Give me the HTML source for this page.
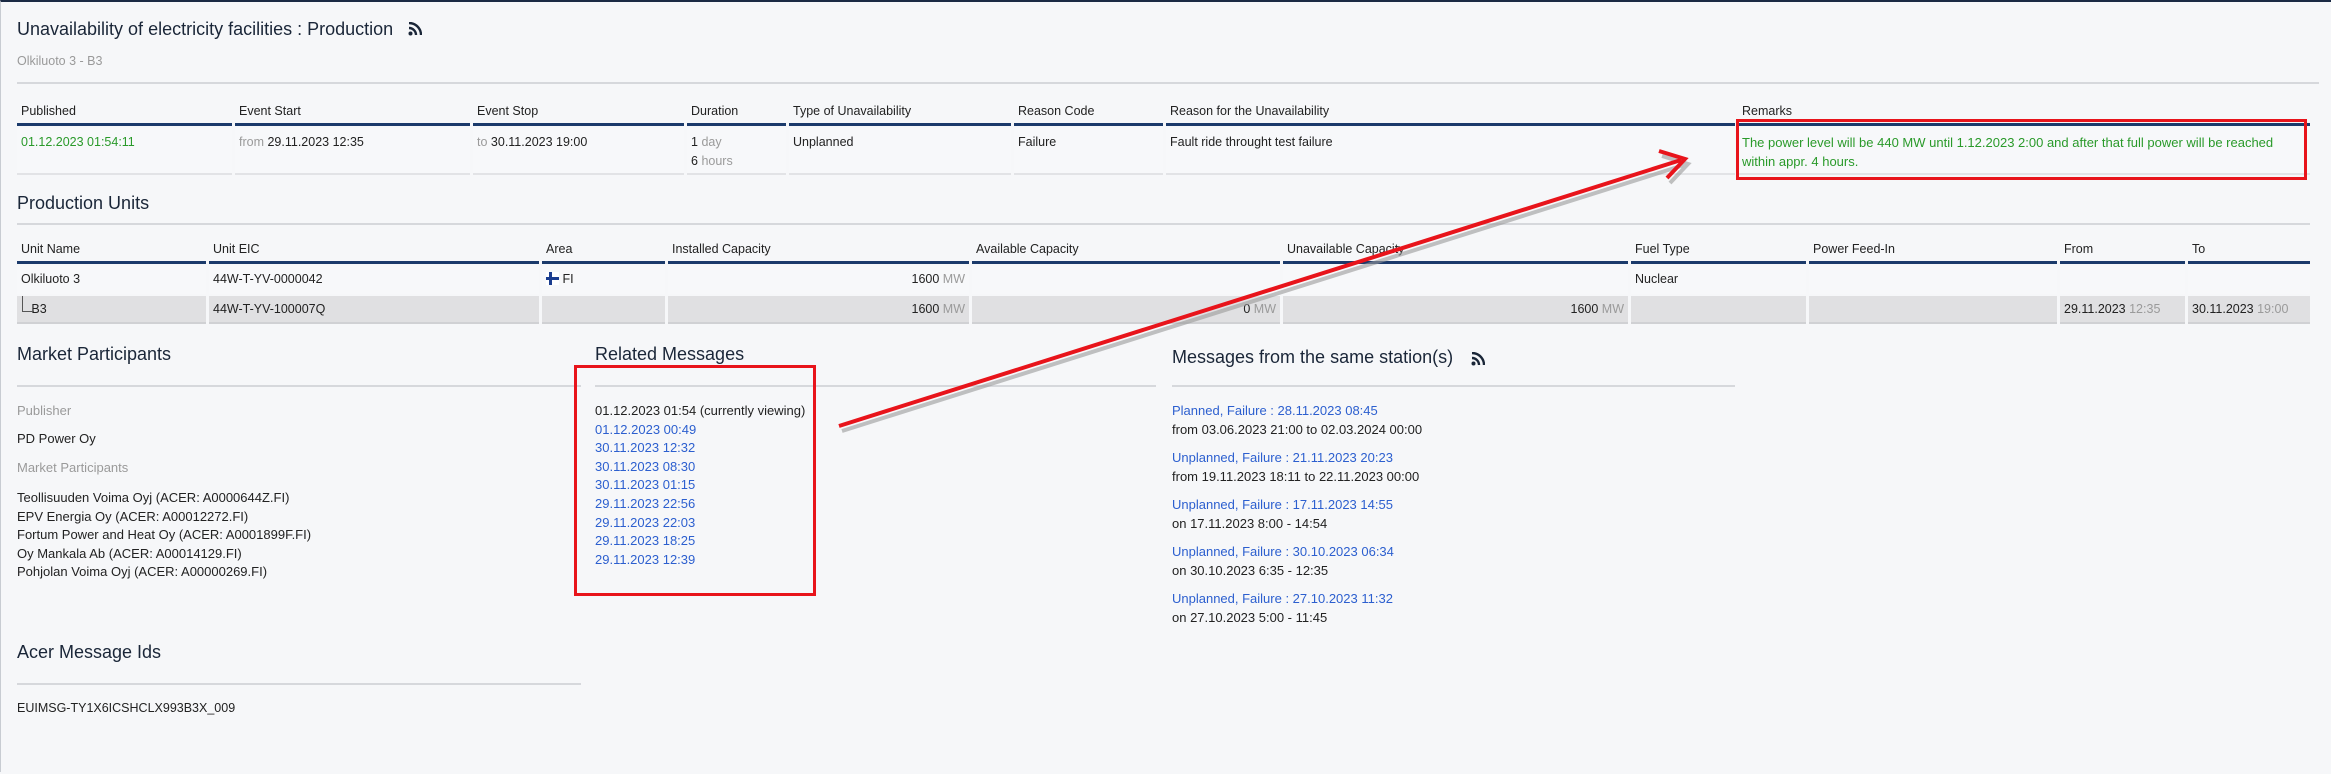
<!DOCTYPE html>
<html><head><meta charset="utf-8"><style>
*{margin:0;padding:0;box-sizing:border-box}
body{width:2331px;height:772px;background:#f6f7f9;font-family:"Liberation Sans",Arial,sans-serif;font-size:13px;color:#222;position:relative;overflow:hidden;border-top:2px solid #1b2a44;border-left:1px solid #c8ccd2}
.a{position:absolute;white-space:nowrap}
.h{font-size:18px;color:#1a2638}
.hr{position:absolute;height:2px;background:#d6d8dc}
.g{color:#9a9a9a}.gr{color:#2a9a2a}.bl{color:#2c5fcf}
.th{position:absolute;top:96px;height:28px;border-bottom:3px solid #1b3a6b;padding:6px 4px;font-size:12.5px}
.td{position:absolute;height:47px;border-bottom:2px solid #e2e3e6;background:#f7f8fa;padding:5px 4px;font-size:12.5px;line-height:19px}
.th2{position:absolute;top:234px;height:28px;border-bottom:3px solid #1b3a6b;padding:6px 4px;font-size:12.5px}
.r1{position:absolute;top:264px;height:28px;padding:6px 4px;font-size:12.5px;background:#f7f8fa}
.r2{position:absolute;top:294px;height:28px;padding:6px 4px;font-size:12.5px;background:#e0e0e2;border-bottom:2px solid #d0d1d4}
.rt{text-align:right}
</style></head><body>
<div class="a h" style="left:16px;top:17px">Unavailability of electricity facilities : Production</div>
<svg class="a" style="left:407px;top:20px" width="14" height="14" viewBox="0 0 14 14"><circle cx="2.5" cy="11.5" r="2" fill="#1a2638"/><path d="M1 6a7 7 0 0 1 7 7" stroke="#1a2638" stroke-width="2.4" fill="none"/><path d="M1 1a12 12 0 0 1 12 12" stroke="#1a2638" stroke-width="2.4" fill="none"/></svg>
<div class="a g" style="left:16px;top:52px;font-size:12.5px">Olkiluoto 3 - B3</div>
<div class="hr" style="left:16px;top:80px;width:2302px"></div>

<div class="th" style="left:16px;width:215px">Published</div>
<div class="th" style="left:234px;width:235px">Event Start</div>
<div class="th" style="left:472px;width:211px">Event Stop</div>
<div class="th" style="left:686px;width:99px">Duration</div>
<div class="th" style="left:788px;width:222px">Type of Unavailability</div>
<div class="th" style="left:1013px;width:149px">Reason Code</div>
<div class="th" style="left:1165px;width:569px">Reason for the Unavailability</div>
<div class="th" style="left:1737px;width:572px">Remarks</div>
<div class="td gr" style="left:16px;top:126px;width:215px">01.12.2023 01:54:11</div>
<div class="td" style="left:234px;top:126px;width:235px"><span class="g">from</span> 29.11.2023 12:35</div>
<div class="td" style="left:472px;top:126px;width:211px"><span class="g">to</span> 30.11.2023 19:00</div>
<div class="td" style="left:686px;top:126px;width:99px">1 <span class="g">day</span><br>6 <span class="g">hours</span></div>
<div class="td" style="left:788px;top:126px;width:222px">Unplanned</div>
<div class="td" style="left:1013px;top:126px;width:149px">Failure</div>
<div class="td" style="left:1165px;top:126px;width:569px">Fault ride throught test failure</div>
<div class="td gr" style="left:1737px;top:126px;width:572px;font-size:13px">The power level will be 440 MW until 1.12.2023 2:00 and after that full power will be reached<br>within appr. 4 hours.</div>

<div class="a h" style="left:16px;top:191px">Production Units</div>
<div class="hr" style="left:16px;top:221px;width:2293px"></div>

<div class="th2" style="left:16px;width:189px">Unit Name</div>
<div class="th2" style="left:208px;width:330px">Unit EIC</div>
<div class="th2" style="left:541px;width:123px">Area</div>
<div class="th2" style="left:667px;width:301px">Installed Capacity</div>
<div class="th2" style="left:971px;width:308px">Available Capacity</div>
<div class="th2" style="left:1282px;width:345px">Unavailable Capacity</div>
<div class="th2" style="left:1630px;width:175px">Fuel Type</div>
<div class="th2" style="left:1808px;width:248px">Power Feed-In</div>
<div class="th2" style="left:2059px;width:125px">From</div>
<div class="th2" style="left:2187px;width:122px">To</div>

<div class="r1" style="left:16px;width:189px">Olkiluoto 3</div>
<div class="r1" style="left:208px;width:330px">44W-T-YV-0000042</div>
<div class="r1" style="left:541px;width:123px"><svg width="13" height="13" style="vertical-align:-2px"><rect width="13" height="13" fill="#fff"/><rect x="3" width="3" height="13" fill="#1a3d8f"/><rect y="5" width="13" height="3" fill="#1a3d8f"/></svg> FI</div>
<div class="r1 rt" style="left:667px;width:301px">1600 <span class="g">MW</span></div>
<div class="r1" style="left:971px;width:308px"></div>
<div class="r1" style="left:1282px;width:345px"></div>
<div class="r1" style="left:1630px;width:175px">Nuclear</div>
<div class="r1" style="left:1808px;width:248px"></div>
<div class="r1" style="left:2059px;width:125px"></div>
<div class="r1" style="left:2187px;width:122px"></div>

<div class="r2" style="left:16px;width:189px">&nbsp;&nbsp;&nbsp;B3</div>
<div class="a" style="left:21px;top:294px;width:1px;height:15px;background:#555"></div>
<div class="a" style="left:21px;top:309px;width:12px;height:1px;background:#555"></div>
<div class="r2" style="left:208px;width:330px">44W-T-YV-100007Q</div>
<div class="r2" style="left:541px;width:123px"></div>
<div class="r2 rt" style="left:667px;width:301px">1600 <span class="g">MW</span></div>
<div class="r2 rt" style="left:971px;width:308px">0 <span class="g">MW</span></div>
<div class="r2 rt" style="left:1282px;width:345px">1600 <span class="g">MW</span></div>
<div class="r2" style="left:1630px;width:175px"></div>
<div class="r2" style="left:1808px;width:248px"></div>
<div class="r2" style="left:2059px;width:125px">29.11.2023 <span class="g">12:35</span></div>
<div class="r2" style="left:2187px;width:122px">30.11.2023 <span class="g">19:00</span></div>

<div class="a h" style="left:16px;top:342px">Market Participants</div>
<div class="hr" style="left:16px;top:383px;width:564px"></div>
<div class="a g" style="left:16px;top:401px">Publisher</div>
<div class="a" style="left:16px;top:429px">PD Power Oy</div>
<div class="a g" style="left:16px;top:458px">Market Participants</div>
<div class="a" style="left:16px;top:487px;line-height:18.5px">Teollisuuden Voima Oyj (ACER: A0000644Z.FI)<br>EPV Energia Oy (ACER: A00012272.FI)<br>Fortum Power and Heat Oy (ACER: A0001899F.FI)<br>Oy Mankala Ab (ACER: A00014129.FI)<br>Pohjolan Voima Oyj (ACER: A00000269.FI)</div>

<div class="a h" style="left:594px;top:342px">Related Messages</div>
<div class="hr" style="left:594px;top:383px;width:561px"></div>
<div class="a" style="left:594px;top:400px;line-height:18.6px">01.12.2023 01:54 (currently viewing)<br><span class="bl">01.12.2023 00:49<br>30.11.2023 12:32<br>30.11.2023 08:30<br>30.11.2023 01:15<br>29.11.2023 22:56<br>29.11.2023 22:03<br>29.11.2023 18:25<br>29.11.2023 12:39</span></div>

<div class="a h" style="left:16px;top:640px">Acer Message Ids</div>
<div class="hr" style="left:16px;top:681px;width:564px"></div>
<div class="a" style="left:16px;top:699px;font-size:12.5px">EUIMSG-TY1X6ICSHCLX993B3X_009</div>

<div class="a h" style="left:1171px;top:345px">Messages from the same station(s)</div>
<svg class="a" style="left:1470px;top:350px" width="14" height="14" viewBox="0 0 14 14"><circle cx="2.5" cy="11.5" r="2" fill="#1a2638"/><path d="M1 6a7 7 0 0 1 7 7" stroke="#1a2638" stroke-width="2.4" fill="none"/><path d="M1 1a12 12 0 0 1 12 12" stroke="#1a2638" stroke-width="2.4" fill="none"/></svg>
<div class="hr" style="left:1171px;top:383px;width:563px"></div>
<div class="a" style="left:1171px;top:400px;line-height:18.8px">
<span class="bl">Planned, Failure : 28.11.2023 08:45</span><br>from 03.06.2023 21:00 to 02.03.2024 00:00</div>
<div class="a" style="left:1171px;top:447px;line-height:18.8px"><span class="bl">Unplanned, Failure : 21.11.2023 20:23</span><br>from 19.11.2023 18:11 to 22.11.2023 00:00</div>
<div class="a" style="left:1171px;top:494px;line-height:18.8px"><span class="bl">Unplanned, Failure : 17.11.2023 14:55</span><br>on 17.11.2023 8:00 - 14:54</div>
<div class="a" style="left:1171px;top:541px;line-height:18.8px"><span class="bl">Unplanned, Failure : 30.10.2023 06:34</span><br>on 30.10.2023 6:35 - 12:35</div>
<div class="a" style="left:1171px;top:588px;line-height:18.8px"><span class="bl">Unplanned, Failure : 27.10.2023 11:32</span><br>on 27.10.2023 5:00 - 11:45</div>

<div class="a" style="left:573px;top:363px;width:242px;height:231px;border:3px solid #e8141b"></div>
<div class="a" style="left:1735px;top:117px;width:571px;height:61px;border:3px solid #e8141b"></div>
<svg class="a" style="left:0;top:0" width="2331" height="772">
<g transform="translate(3,5)" stroke="#9a9a9a" opacity="0.6" fill="none" stroke-width="4"><path d="M838 424 L1680 158"/><path d="M1658 149 L1684 157 L1666 176"/></g>
<g stroke="#e8141b" fill="none" stroke-width="4"><path d="M838 424 L1680 158"/><path d="M1658 149 L1684 157 L1666 176"/></g>
</svg>
</body></html>
